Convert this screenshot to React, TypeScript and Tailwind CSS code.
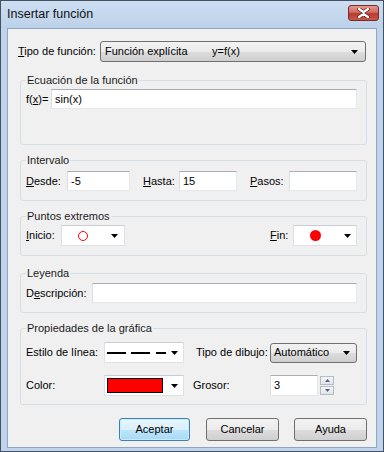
import React from "react";

const Arrow = () => (
  <svg width="7" height="4" viewBox="0 0 7 4" className="block">
    <path d="M0 0h7L3.5 4z" fill="#000" />
  </svg>
);

// Win7 style text box
const TextBox = ({ value, className = "" }: { value?: string; className?: string }) => (
  <div
    className={`h-[20px] bg-white border border-[#e3e9ef] border-t-[#abadb3] border-l-[#dbdfe6] flex items-center pl-[3px] text-[11px] ${className}`}
  >
    {value}
  </div>
);

// white drop-down (owner drawn combo)
const Combo = ({ children, className = "" }: { children?: React.ReactNode; className?: string }) => (
  <div
    className={`h-[21px] bg-white border border-[#dde1e6] border-t-[#c9ccd2] flex items-center ${className}`}
  >
    {children}
  </div>
);

const btnGray =
  "bg-[linear-gradient(#f2f2f2_0%,#ebebeb_50%,#dddddd_51%,#cfcfcf_100%)] border border-[#707070] rounded-[3px]";

const Group = ({
  title,
  children,
  className = "",
}: {
  title: string;
  children: React.ReactNode;
  className?: string;
}) => (
  <fieldset
    className={`ml-[12px] w-[347px] border border-[#d5dfe5] rounded-[3px] pl-[5px] pr-[9px] ${className}`}
  >
    <legend className="px-[1px] text-[11px] leading-[14px] text-[#1a1a1a]">{title}</legend>
    {children}
  </fieldset>
);

const U = ({ children }: { children: React.ReactNode }) => <span className="underline">{children}</span>;

export default function App() {
  return (
    <div className="w-[384px] h-[452px] border border-[#46515f] bg-[#bfd4ec] flex flex-col font-['Liberation_Sans',Arial,sans-serif] text-black select-none">
      {/* Title bar */}
      <div className="h-[27px] flex bg-[linear-gradient(#cddef2,#bcd2ea)] pl-[6px] pr-[4px]">
        <div className="self-center text-[12.5px] text-[#111] pb-[1px]">Insertar función</div>
        <div className="ml-auto mt-[4px] w-[31px] h-[16px] rounded-[3px] border border-[#7a2a2a] bg-[linear-gradient(#e19a8f_0%,#d06a5e_45%,#b83a2d_55%,#c8574a_100%)] flex items-center justify-center">
          <svg width="13" height="10" viewBox="0 0 13 10">
            <path
              d="M2 1L6.5 4.2L11 1M2 9L6.5 5.8L11 9"
              stroke="#5a2020"
              strokeWidth="3.6"
              fill="none"
              strokeLinecap="round"
            />
            <path
              d="M2 1L6.5 4.2L11 1M2 9L6.5 5.8L11 9"
              stroke="#fff"
              strokeWidth="2.2"
              fill="none"
              strokeLinecap="round"
            />
          </svg>
        </div>
      </div>

      {/* Client area */}
      <div className="mx-[6px] h-[420px] border border-[#8fa6c2] bg-[#f0f0f0] flex flex-col text-[11px]">
        {/* Tipo de función */}
        <div className="mt-[12px] pl-[10px] flex items-center">
          <div className="w-[82px]">
            <U>T</U>ipo de función:
          </div>
          <div className={`w-[266px] h-[21px] flex items-center pl-[4px] pr-[7px] ${btnGray}`}>
            <span className="w-[107px]">Función explícita</span>
            <span>y=f(x)</span>
            <span className="ml-auto">
              <Arrow />
            </span>
          </div>
        </div>

        {/* Ecuación */}
        <Group title="Ecuación de la función" className="mt-[11px] pb-[35px]">
          <div className="mt-[2px] flex items-center">
            <div className="w-[25px]">
              f(<U>x</U>)=
            </div>
            <TextBox value="sin(x)" className="flex-1" />
          </div>
        </Group>

        {/* Intervalo */}
        <Group title="Intervalo" className="mt-[8px] pb-[9px]">
          <div className="mt-[4px] flex items-center">
            <div className="w-[41px]">
              <U>D</U>esde:
            </div>
            <TextBox value="-5" className="w-[63px]" />
            <div className="ml-[13px] w-[36px]">
              <U>H</U>asta:
            </div>
            <TextBox value="15" className="w-[58px]" />
            <div className="ml-[13px] w-[39px]">
              <U>P</U>asos:
            </div>
            <TextBox className="w-[68px]" />
          </div>
        </Group>

        {/* Puntos extremos */}
        <Group title="Puntos extremos" className="mt-[8px] pb-[9px]">
          <div className="mt-[2px] flex items-center justify-between">
            <div className="flex items-center">
              <div className="w-[35px]">
                <U>I</U>nicio:
              </div>
              <Combo className="w-[64px] pl-[16px] pr-[6px]">
                <div className="w-[10px] h-[10px] rounded-full border border-[#ff0000]" />
                <span className="ml-auto">
                  <Arrow />
                </span>
              </Combo>
            </div>
            <div className="flex items-center">
              <div className="w-[23px]">
                <U>F</U>in:
              </div>
              <Combo className="w-[64px] pl-[16px] pr-[5px]">
                <div className="w-[11px] h-[11px] rounded-full bg-[#ff0000]" />
                <span className="ml-auto">
                  <Arrow />
                </span>
              </Combo>
            </div>
          </div>
        </Group>

        {/* Leyenda */}
        <Group title="Leyenda" className="mt-[10px] pb-[9px]">
          <div className="mt-[3px] flex items-center">
            <div className="w-[66px]">
              D<U>e</U>scripción:
            </div>
            <TextBox className="flex-1 border-[#b5cfe7] border-t-[#7da2ce] border-l-[#a4c3e2]" />
          </div>
        </Group>

        {/* Propiedades */}
        <Group title="Propiedades de la gráfica" className="mt-[8px] pb-[8px]">
          <div className="mt-[7px] flex items-center">
            <div className="w-[78px]">Estilo de línea:</div>
            <Combo className="w-[80px] pl-[2px] pr-[5px]">
              <svg width="59" height="4" viewBox="0 0 59 4">
                <path d="M0 2h19M24 2h19M49 2h10" stroke="#000" strokeWidth="2" />
              </svg>
              <span className="ml-auto">
                <Arrow />
              </span>
            </Combo>
            <div className="ml-[12px] w-[74px]">Tipo de dibujo:</div>
            <div className={`w-[87px] h-[20px] flex items-center pl-[3px] pr-[6px] ${btnGray}`}>
              <span>Automático</span>
              <span className="ml-auto">
                <Arrow />
              </span>
            </div>
          </div>
          <div className="mt-[12px] flex items-center">
            <div className="w-[78px]">Color:</div>
            <Combo className="w-[80px] pl-[2px] pr-[5px]">
              <div className="w-[56px] h-[15px] bg-[#ff0000] border border-black" />
              <span className="ml-auto">
                <Arrow />
              </span>
            </Combo>
            <div className="ml-[9px] w-[77px]">Grosor:</div>
            <TextBox value="3" className="w-[48px] h-[21px]" />
            <div className="ml-[2px] w-[14px] flex flex-col gap-[1px]">
              <div className="h-[9px] border border-[#b4bcc6] bg-[linear-gradient(#f6f8fa,#dfe4ea)] flex items-center justify-center">
                <svg width="5" height="3" viewBox="0 0 5 3">
                  <path d="M0 3h5L2.5 0z" fill="#4d6185" />
                </svg>
              </div>
              <div className="h-[9px] border border-[#b4bcc6] bg-[linear-gradient(#f6f8fa,#dfe4ea)] flex items-center justify-center">
                <svg width="5" height="3" viewBox="0 0 5 3">
                  <path d="M0 0h5L2.5 3z" fill="#4d6185" />
                </svg>
              </div>
            </div>
          </div>
        </Group>

        {/* Buttons */}
        <div className="mt-[13px] flex justify-end pr-[9px]">
          <button className="w-[71px] h-[23px] rounded-[3px] border border-[#3c7fb1] bg-[linear-gradient(#eaf6fd_0%,#d9f0fc_50%,#bee6fd_51%,#a7d9f5_100%)] shadow-[inset_0_0_0_1px_#c7ecff] text-[11px]">
            Aceptar
          </button>
          <button className={`ml-[16px] w-[73px] h-[23px] text-[11px] ${btnGray}`}>Cancelar</button>
          <button className={`ml-[15px] w-[73px] h-[23px] text-[11px] ${btnGray}`}>Ayuda</button>
        </div>
      </div>
    </div>
  );
}
